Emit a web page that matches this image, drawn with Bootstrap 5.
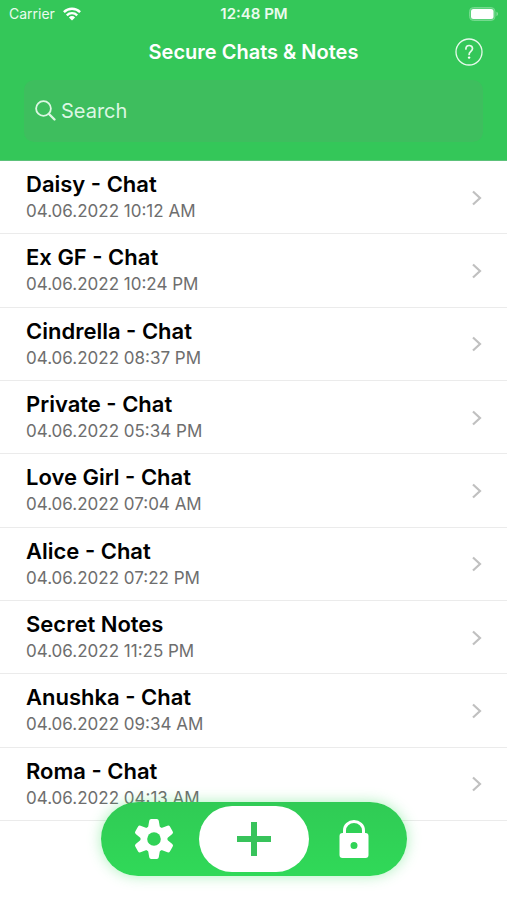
<!DOCTYPE html>
<html lang="en">
<head>
<meta charset="utf-8">
<meta name="viewport" content="width=device-width, initial-scale=1">
<title>Secure Chats &amp; Notes</title>
<link href="https://cdn.jsdelivr.net/npm/bootstrap@5.3.0/dist/css/bootstrap.min.css" rel="stylesheet">
<style>
  body { font-family: Inter, "Liberation Sans", sans-serif; background: #fff; color: #000; }
  .app-header { background: #34c759; color: #fff; height: 161px; border-bottom: 1px solid #5cc27a; }
  .status-bar { height: 28px; padding: 0 8px 0 9px; font-size: 14px; line-height: 28px; color: #eafbee; }
  .status-time { font-size: 15px; font-weight: 600; }
  .title-bar { height: 48px; padding: 0 24px; }
  .title-bar h1 { font-size: 20px; line-height: 28px; font-weight: 600; }
  .side-slot { width: 28px; height: 28px; }
  .search-box { margin: 4px 24px 0; height: 62px; padding: 0 11px; border-radius: 10px; background: #3ebe5e; }
  .search-box .form-control { font-size: 20px; line-height: 32px; color: #fff; }
  .search-box .form-control::placeholder { color: #dcf7e3; opacity: 1; }
  .chat-list { display: grid; grid-auto-rows: 1fr; min-height: 660px; }
  .chat-row { padding: 1px 24px 0 26px; border-bottom: 1px solid #ebebeb; color: #000; }
  .chat-name { font-size: 22px; line-height: 28px; font-weight: 600; }
  .chat-date { font-size: 17px; line-height: 27px; color: #6e6e6e; }
  .dock-wrap { bottom: 24px; pointer-events: none; }
  .dock { width: 306px; height: 74px; border-radius: 37px; padding: 4px 0; pointer-events: auto;
    background: linear-gradient(#30cb55, #30d958); box-shadow: 0 0 14px rgba(48, 217, 88, .4); }
  .dock-add { width: 110px; border-radius: 33px; background: #fff; }
</style>
</head>
<body>
<header class="app-header">
  <div class="status-bar row g-0">
    <div class="col d-flex align-items-center">
      <span>Carrier</span>
      <svg class="ms-2" width="18" height="14" viewBox="0 0 18 14" fill="none" stroke="#fff" stroke-width="2.4" aria-hidden="true">
        <path d="M.9 5.1a11.6 11.6 0 0 1 16.2 0M3.8 8.3a7.4 7.4 0 0 1 10.4 0"/>
        <path d="M5.9 10.4a4.4 4.4 0 0 1 6.2 0L9 13.6z" fill="#fff" stroke="none"/>
      </svg>
    </div>
    <div class="col-auto status-time">12:48 PM</div>
    <div class="col d-flex align-items-center justify-content-end">
      <svg width="30" height="14" viewBox="0 0 30 14" aria-hidden="true">
        <rect x=".5" y=".5" width="25.5" height="13" rx="4" fill="#5bd27a" stroke="#74da8e"/>
        <rect x="2" y="2" width="22.5" height="10" rx="2.5" fill="#fff"/>
        <path d="M27.5 4.8a2.4 2.4 0 0 1 0 4.4z" fill="#8be0a0"/>
      </svg>
    </div>
  </div>
  <div class="title-bar d-flex align-items-center justify-content-between">
    <span class="side-slot"></span>
    <h1 class="m-0">Secure Chats &amp; Notes</h1>
    <button type="button" class="btn p-0 border-0 side-slot d-flex" aria-label="Help">
      <svg width="28" height="28" viewBox="0 0 28 28" fill="none" stroke="#e6faeb" aria-hidden="true">
        <circle cx="14" cy="14" r="13" stroke-width="1.3"/>
        <path d="M10.900 10.900c0-4.600 6.600-4.400 6.600-.3 0 2.700-3.400 2.800-3.400 5.900" stroke-width="1.700" stroke-linecap="round"/>
        <circle cx="14.1" cy="19.6" r="1.2" fill="#fff" stroke="none"/>
      </svg>
    </button>
  </div>
  <div class="search-box d-flex align-items-center">
    <label for="search" class="d-flex">
      <svg width="22" height="22" viewBox="0 0 22 22" fill="none" stroke="#dcf7e3" stroke-width="1.8" stroke-linecap="round" role="img" aria-label="Search">
        <circle cx="8.5" cy="8.5" r="7.4"/><path d="M14 14l5.500 5.500" stroke-width="2.4"/>
      </svg>
    </label>
    <input type="text" id="search" class="form-control bg-transparent border-0 rounded-0 shadow-none py-0 px-1" placeholder="Search">
  </div>
</header>

<main class="chat-list" id="chats"></main>

<div class="dock-wrap position-fixed start-0 end-0 d-flex justify-content-center">
  <nav class="dock d-flex" aria-label="Actions">
    <button type="button" class="btn border-0 p-0 col d-flex align-items-center justify-content-center" aria-label="Settings">
      <svg class="ms-2" width="42" height="42" viewBox="-21 -21 42 42" aria-hidden="true">
        <g fill="#fff" stroke="#fff" stroke-width="4" stroke-linejoin="round">
          <path id="tooth" d="M-2.800-18h5.600L4-11v22L2.800 18h-5.600L-4 11v-22z"/>
          <use href="#tooth" transform="rotate(60)"/>
          <use href="#tooth" transform="rotate(120)"/>
          <circle r="11.500"/>
        </g>
        <circle r="6.800" fill="#30d257"/>
      </svg>
    </button>
    <button type="button" class="btn border-0 p-0 dock-add d-flex align-items-center justify-content-center" aria-label="Add">
      <svg width="36" height="34" viewBox="0 0 36 34" fill="#38c35b" aria-hidden="true"><path d="M15 0h6v14h14v6H21v14h-6V20H1v-6h14z"/></svg>
    </button>
    <button type="button" class="btn border-0 p-0 col d-flex align-items-center justify-content-center" aria-label="Lock">
      <svg class="me-2" width="30" height="38" viewBox="0 0 30 38" aria-hidden="true">
        <path d="M5.500 16V10.500a9.500 8.900 0 0 1 19 0V16" fill="none" stroke="#fff" stroke-width="3"/>
        <path fill="#fff" fill-rule="evenodd" d="M3.500 13h23q3 0 3 3v19q0 3-3 3h-23q-3 0-3-3V16q0-3 3-3zM15 22a3.500 3.500 0 1 0 0 7a3.500 3.500 0 0 0 0-7z"/>
      </svg>
    </button>
  </nav>
</div>

<script src="https://cdn.jsdelivr.net/npm/bootstrap@5.3.0/dist/js/bootstrap.bundle.min.js"></script>
<script>
  const chats = [
    ["Daisy - Chat", "04.06.2022 10:12 AM"],
    ["Ex GF - Chat", "04.06.2022 10:24 PM"],
    ["Cindrella - Chat", "04.06.2022 08:37 PM"],
    ["Private - Chat", "04.06.2022 05:34 PM"],
    ["Love Girl - Chat", "04.06.2022 07:04 AM"],
    ["Alice - Chat", "04.06.2022 07:22 PM"],
    ["Secret Notes", "04.06.2022 11:25 PM"],
    ["Anushka - Chat", "04.06.2022 09:34 AM"],
    ["Roma - Chat", "04.06.2022 04:13 AM"]
  ];
  document.getElementById("chats").innerHTML = chats.map(([name, date]) => `
    <a href="#" class="chat-row d-flex align-items-center justify-content-between text-decoration-none">
      <span><span class="chat-name d-block">${name}</span><span class="chat-date d-block">${date}</span></span>
      <svg width="12" height="16" viewBox="0 0 12 16" fill="none" stroke="#c0c0c0" stroke-width="2.2" aria-hidden="true"><path d="M2 1.500L9 8l-7 6.500"/></svg>
    </a>`).join("");
</script>
</body>
</html>
